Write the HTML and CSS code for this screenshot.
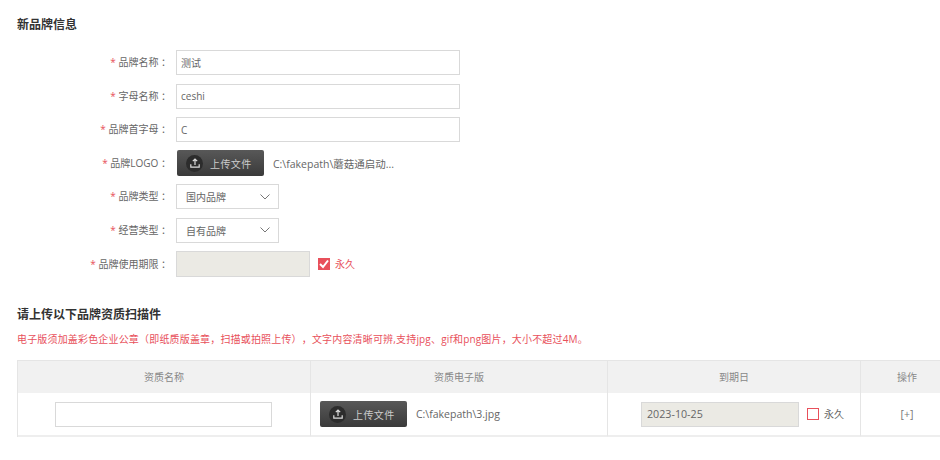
FILE: index.html
```html
<!DOCTYPE html>
<html lang="zh-CN">
<head>
<meta charset="utf-8">
<title>新品牌信息</title>
<link rel="stylesheet" href="styles.css">
</head>
<body>
<main class="page">
  <h2 class="title first">新品牌信息</h2>
  <form class="form">
    <div class="row"><label class="label"><i>*</i> 品牌名称 ：</label><input class="input wide" value="测试"></div>
    <div class="row"><label class="label"><i>*</i> 字母名称 ：</label><input class="input wide" value="ceshi"></div>
    <div class="row"><label class="label"><i>*</i> 品牌首字母 ：</label><input class="input wide" value="C"></div>
    <div class="row"><label class="label"><i>*</i> 品牌LOGO ：</label>
      <button type="button" class="upload">
        <span class="disc"><svg viewBox="0 0 12 12" width="12" height="12"><path d="M6 8V2.200M3.800 4.200 6 2l2.200 2.200M1.800 7.200v3h8.400v-3" fill="none" stroke="#ddd" stroke-width="1.200"/></svg></span>上传文件
      </button>
      <span class="file">C:\fakepath\蘑菇通启动...</span>
    </div>
    <div class="row"><label class="label"><i>*</i> 品牌类型 ：</label>
      <div class="select"><span>国内品牌</span><svg viewBox="0 0 10 6" width="10" height="6"><path d="M.5.5 5 5 9.500.5" fill="none" stroke="#777"/></svg></div>
    </div>
    <div class="row"><label class="label"><i>*</i> 经营类型 ：</label>
      <div class="select"><span>自有品牌</span><svg viewBox="0 0 10 6" width="10" height="6"><path d="M.5.5 5 5 9.500.5" fill="none" stroke="#777"/></svg></div>
    </div>
    <div class="row"><label class="label"><i>*</i> 品牌使用期限 ：</label>
      <div class="input date"></div>
      <span class="check on"><svg viewBox="0 0 12 12" width="12" height="12"><path d="M2 6l3 3 5-6.500" fill="none" stroke="#fff" stroke-width="2"/></svg></span>
      <span class="forever red">永久</span>
    </div>
  </form>
  <h2 class="title second">请上传以下品牌资质扫描件</h2>
  <p class="note">电子版须加盖彩色企业公章（即纸质版盖章，扫描或拍照上传），文字内容清晰可辨,支持jpg、gif和png图片，大小不超过4M。</p>
  <div class="table">
    <div class="cell head">资质名称</div>
    <div class="cell head">资质电子版</div>
    <div class="cell head">到期日</div>
    <div class="cell head">操作</div>
    <div class="cell body"><input class="input name"></div>
    <div class="cell body left">
      <button type="button" class="upload">
        <span class="disc"><svg viewBox="0 0 12 12" width="12" height="12"><path d="M6 8V2.200M3.800 4.200 6 2l2.200 2.200M1.800 7.200v3h8.400v-3" fill="none" stroke="#ddd" stroke-width="1.200"/></svg></span>上传文件
      </button>
      <span class="file">C:\fakepath\3.jpg</span>
    </div>
    <div class="cell body expiry">
      <div class="input date small">2023-10-25</div>
      <span class="check"></span>
      <span class="forever">永久</span>
    </div>
    <div class="cell body op">[+]</div>
  </div>
</main>
</body>
</html>
```
FILE: styles.css
```css
* { box-sizing: border-box; }
html, body { margin: 0; height: 460px; overflow: hidden; background: #fff; }
body { font-family: "Open Sans", "Noto Sans CJK SC", sans-serif; font-size: 10px; color: #666; text-spacing-trim: space-all; }
.page { width: 940px; padding: 17px 0 0 17px; overflow: hidden; }
.title { margin: 0; font-size: 12px; font-weight: 700; color: #333; line-height: 15px; }
.form { display: flex; flex-direction: column; gap: 8.4px; margin-top: 18px; }
.row { display: flex; align-items: center; height: 25.2px; }
.row .upload { margin-left: 1px; }
.label { width: 159px; padding: 0 5px 2px 0; text-align: right; white-space: nowrap; }
.label i { color: #e8505b; font-style: normal; }
.input { height: 25px; border: 1px solid #d9d9d9; background: #fff; padding: 0 4px; font: inherit; color: #666; outline: none; border-radius: 0; }
.wide { width: 284px; }
.date { width: 134px; height: 26px; background: #ebeae4; }
.upload { display: flex; align-items: center; gap: 7px; width: 87px; height: 26px; padding: 0 0 0 9px; border: 0; border-radius: 2px; background: linear-gradient(#585858, #3a3a3a); color: #ccc; font: inherit; letter-spacing: .4px; }
.disc { display: flex; align-items: center; justify-content: center; width: 17px; height: 17px; border-radius: 50%; background: #2c2c2c; }
.file { margin-left: 9px; white-space: nowrap; color: #666; font-size: 10.5px; }
.select { display: flex; align-items: center; justify-content: space-between; width: 103px; height: 25px; border: 1px solid #d9d9d9; padding: 0 8px 0 9px; }
.check { display: flex; align-items: center; justify-content: center; width: 12px; height: 12px; margin-left: 8px; border: 1px solid #e8505b; }
.check.on { background: #e8505b; }
.check svg { flex: none; }
.forever { margin: 0 0 2px 5px; white-space: nowrap; }
.red { color: #e8505b; }
.second { margin-top: 30px; }
.note { margin: 9px 0 0; color: #e8505b; line-height: 16px; white-space: nowrap; letter-spacing: .17px; }
.table { display: grid; grid-template-columns: 293px 297px 253px 93px; width: 950px; margin-top: 13px; border-top: 1px solid #e5e5e5; border-left: 1px solid #e5e5e5; }
.cell { border-right: 1px solid #e5e5e5; display: flex; align-items: center; justify-content: center; }
.head { height: 32px; background: #f1f1f1; color: #888; }
.body { height: 44px; padding-top: 1px; border-bottom: 2px solid #eee; }
.left { justify-content: flex-start; padding-left: 9px; }
.name { width: 217px; margin-right: 2px; }
.expiry { justify-content: flex-start; padding-left: 33px; }
.small { display: flex; align-items: center; width: 158px; height: 25px; padding-left: 5px; font-size: 10.7px; }
.op { color: #777; font-size: 10.5px; }
```
